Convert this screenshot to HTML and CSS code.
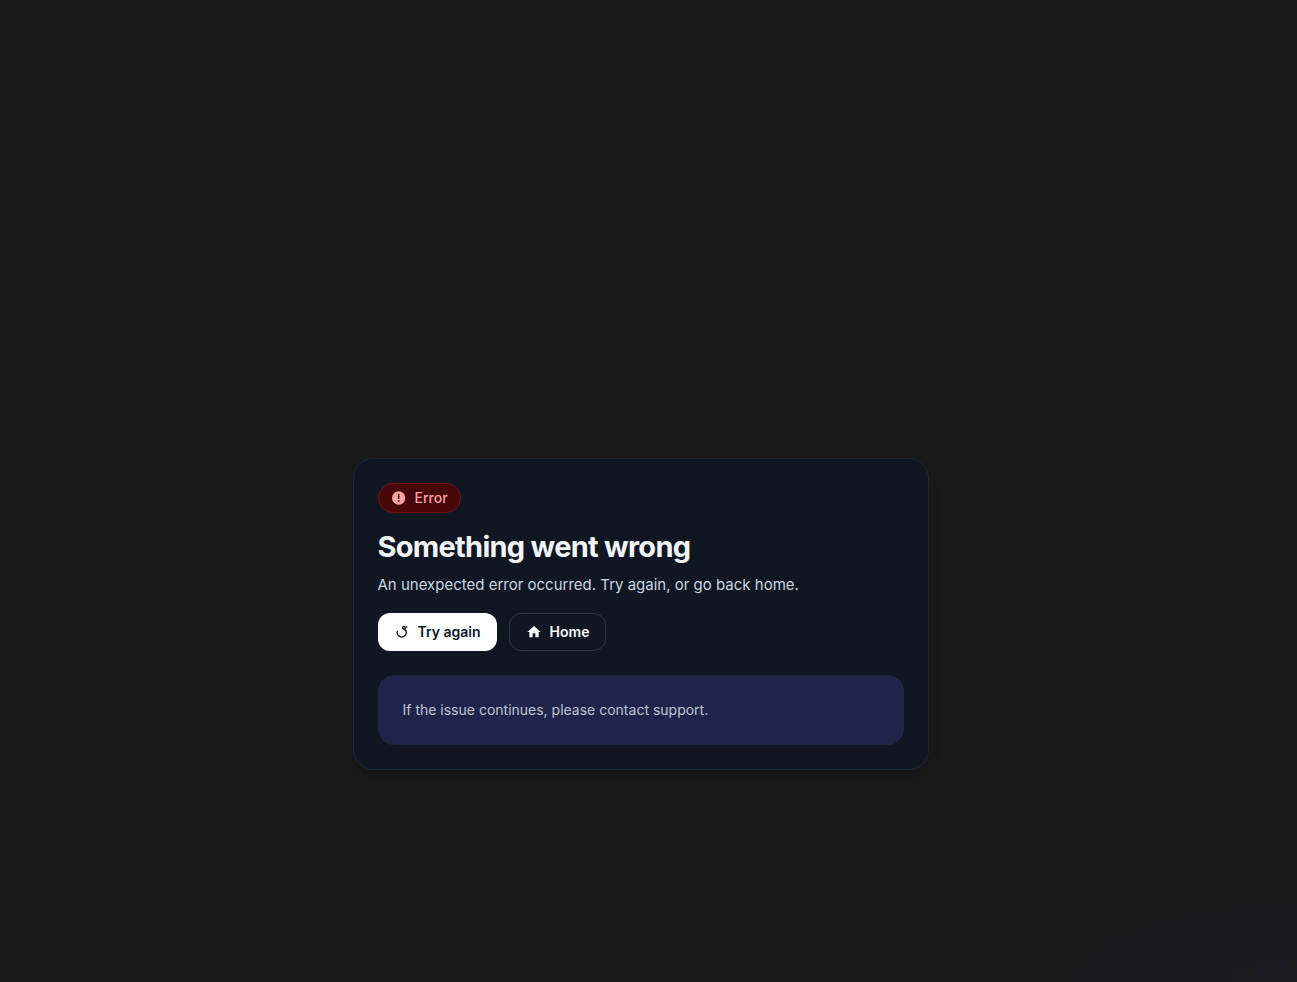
FILE: index.html
```html
<!DOCTYPE html>
<html lang="en">
<head>
<meta charset="utf-8">
<meta name="viewport" content="width=device-width, initial-scale=1">
<title>Something went wrong</title>
<link rel="stylesheet" href="styles.css">
</head>
<body>
<main class="page">
  <section class="card">
    <div class="badge">
      <svg class="icon" viewBox="0 0 24 24" fill="currentColor" aria-hidden="true"><path d="M11.500 2a10 10 0 1 0 0 20 10 10 0 0 0 0-20zm1.200 15.500h-2.400v-2.300h2.400v2.300zm0-4h-2.400V6h2.400v7.500z"/></svg>
      <span>Error</span>
    </div>
    <h1 class="title">Something went wrong</h1>
    <p class="lead">An unexpected error occurred. Try again, or go back home.</p>
    <div class="actions">
      <button class="button button-primary" type="button">
        <svg class="icon" viewBox="0 0 24 24" fill="none" stroke="currentColor" stroke-width="2" aria-hidden="true"><path d="M5.200 10.500a6.700 6.700 0 1 0 11.300-2.300"/><path d="M20 4.200h-3.500c-2-1.500-4 0-3.700 2.300l3.400 2.200.8-3.500"/></svg>
        <span>Try again</span>
      </button>
      <a class="button button-outline" href="#">
        <svg class="icon" viewBox="0 0 24 24" fill="currentColor" aria-hidden="true"><path d="M10 20v-6h4v6h5v-8h3L12 3 2 12h3v8z"/></svg>
        <span>Home</span>
      </a>
    </div>
    <div class="note">If the issue continues, please contact support.</div>
  </section>
</main>
</body>
</html>
```
FILE: styles.css
```css
*, *::before, *::after {
  box-sizing: border-box;
}

body {
  margin: 0;
  background: #19191a;
  color: #f1f5f9;
  font-family: Inter, "Liberation Sans", sans-serif;
  font-size: 14px;
  line-height: 20px;
}

.page {
  display: flex;
  align-items: center;
  justify-content: center;
  min-height: 100vh;
  padding: 246px 16px 0 0;
  background: radial-gradient(ellipse 260px 90px at 100% 100%, #1a1a20, #19191c 60%, #19191a);
}

.card {
  width: 100%;
  max-width: 576px;
  padding: 24px;
  border: 1px solid #1b2738;
  border-radius: 20px;
  background: #111722;
  box-shadow: 0 10px 16px -4px rgba(0, 0, 0, 0.18);
}

.badge {
  display: inline-flex;
  align-items: center;
  gap: 8px;
  padding: 4px 12px;
  border: 1px solid #741116;
  border-radius: 999px;
  background: #450709;
  color: #ffa2a2;
  font-weight: 500;
  vertical-align: top;
}

.icon {
  width: 16px;
  height: 16px;
  flex: none;
}

.title {
  margin: 16px 0 0;
  font-size: 29px;
  font-weight: 700;
  line-height: 36px;
  letter-spacing: -0.025em;
}

.lead {
  margin: 8px 0 0;
  color: #cad5e2;
  font-size: 15px;
  line-height: 24px;
}

.actions {
  display: flex;
  flex-wrap: wrap;
  gap: 12px;
  margin-top: 16px;
}

.button {
  display: inline-flex;
  align-items: center;
  gap: 8px;
  padding: 8px 16px;
  border: 1px solid transparent;
  border-radius: 12px;
  font: inherit;
  font-weight: 600;
  text-decoration: none;
  cursor: pointer;
}

.button-primary {
  border: 0;
  background: #fff;
  color: #0f172b;
}

.button-outline {
  border-color: #29374c;
  color: #f8fafc;
}

.note {
  margin-top: 24px;
  padding: 24px;
  border: 1px solid #1d293d;
  border-radius: 16px;
  background: #20244b;
  color: #bec4d2;
}
```
